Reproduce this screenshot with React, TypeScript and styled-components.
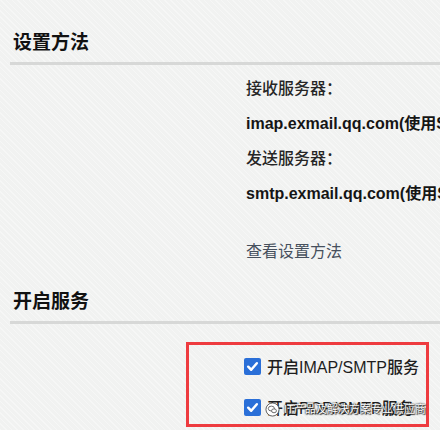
import styled, { createGlobalStyle } from 'styled-components'

const GlobalStyle = createGlobalStyle`
  html, body {
    margin: 0;
    padding: 0;
    background: #f1f2f1;
    overflow: hidden;
  }
  body {
    font-family: "Liberation Sans", "Noto Sans CJK SC", sans-serif;
    color: #1e1e1e;
  }
`

const Page = styled.div`
  width: 440px;
  height: 430px;
  padding-left: 10px;
  box-sizing: border-box;
  overflow: hidden;
  background-color: #f1f2f1;
  background-image: repeating-linear-gradient(
    45deg,
    rgba(255, 255, 255, 0.35) 0 1px,
    transparent 1px 4px
  );
`

const SectionTitle = styled.div<{ top: number }>`
  margin-top: ${({ top }) => top}px;
  padding: 0 0 6px 3px;
  font-size: 19px;
  line-height: 26px;
  font-weight: 700;
  color: #111;
  border-bottom: 3px solid #d7d8d7;
`

const InfoColumn = styled.div`
  margin: 6px 0 0 236px;
  display: flex;
  flex-direction: column;
  white-space: nowrap;
`

const Row = styled.div<{ strong?: boolean }>`
  height: 35px;
  line-height: 35px;
  font-size: 16px;
  font-weight: ${({ strong }) => (strong ? 700 : 500)};
  color: ${({ strong }) => (strong ? '#151515' : '#262626')};
`

const Link = styled.a`
  margin-top: 23px;
  height: 35px;
  line-height: 35px;
  font-size: 16px;
  color: #46505d;
  text-decoration: none;
  cursor: pointer;
`

const Highlight = styled.div`
  position: relative;
  margin: 18px 0 0 176px;
  width: 243px;
  height: 85px;
  box-sizing: border-box;
  border: 3px solid #ee3b3f;
  padding: 7px 0 0 55px;
  display: flex;
  flex-direction: column;
  gap: 13px;
`

const CheckRow = styled.label`
  display: flex;
  align-items: center;
  gap: 6px;
  height: 28px;
  font-size: 16px;
  font-weight: 500;
  white-space: nowrap;
  color: #1e1e1e;
`

const Box = styled.span`
  width: 17px;
  height: 17px;
  border-radius: 2px;
  background: #2a6fd8;
  display: flex;
  align-items: center;
  justify-content: center;
  flex-shrink: 0;
`

const Watermark = styled.div`
  position: absolute;
  left: 76px;
  top: 56px;
  display: flex;
  align-items: center;
  gap: 4px;
  font-size: 11px;
  line-height: 16px;
  color: #fff;
  white-space: nowrap;
  text-shadow: 0 0 1px #222, 0 0 2px #333, 1px 1px 1px #333;
`

const Check = () => (
  <Box>
    <svg width="13" height="13" viewBox="0 0 12 12">
      <path d="M2 6.2 L4.8 9 L10 3" fill="none" stroke="#fff" strokeWidth="2.3" strokeLinecap="round" strokeLinejoin="round" />
    </svg>
  </Box>
)

const WeChatIcon = () => (
  <svg width="15" height="15" viewBox="0 0 16 16">
    <circle cx="8" cy="8" r="7" fill="#fff" stroke="#555" strokeWidth="1" />
    <ellipse cx="6.8" cy="7" rx="3.3" ry="2.6" fill="none" stroke="#555" strokeWidth="0.9" />
    <ellipse cx="9.6" cy="9.4" rx="2.6" ry="2.1" fill="#fff" stroke="#555" strokeWidth="0.9" />
  </svg>
)

const App = () => {
  return (
    <Page>
      <GlobalStyle />
      <SectionTitle top={30}>设置方法</SectionTitle>
      <InfoColumn>
        <Row>接收服务器：</Row>
        <Row strong>imap.exmail.qq.com(使用SSL，端口号993)</Row>
        <Row>发送服务器：</Row>
        <Row strong>smtp.exmail.qq.com(使用SSL，端口号465)</Row>
        <Link>查看设置方法</Link>
      </InfoColumn>
      <SectionTitle top={20}>开启服务</SectionTitle>
      <Highlight>
        <CheckRow>
          <Check />
          开启IMAP/SMTP服务
        </CheckRow>
        <CheckRow>
          <Check />
          开启POP/SMTP服务
        </CheckRow>
        <Watermark>
          <WeChatIcon />
          IT产品及解决方案专业供应商
        </Watermark>
      </Highlight>
    </Page>
  )
}

export default App
